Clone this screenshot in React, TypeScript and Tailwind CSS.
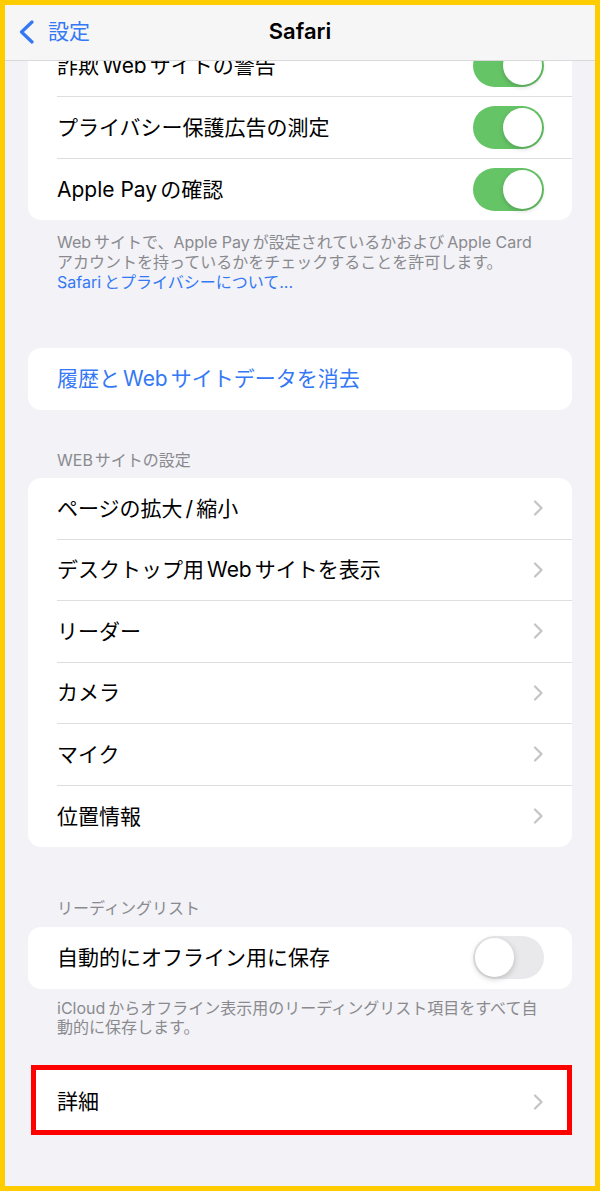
import React from 'react';

const font = { fontFamily: 'Inter, "Noto Sans CJK JP", sans-serif' };

// Latin words inside Japanese text get a little air on both sides, as iOS does
function L({ children }: { children: React.ReactNode }) {
  return <span className="mx-[3px]">{children}</span>;
}

function Chevron() {
  return (
    <svg width="11" height="16" viewBox="0 0 11 16" fill="none" className="shrink-0">
      <path d="M2 1.5 L8.5 8 L2 14.5" stroke="#c4c4c7" strokeWidth="2.2" strokeLinecap="round" strokeLinejoin="round" />
    </svg>
  );
}

function Toggle({ on }: { on: boolean }) {
  return on ? (
    <div className="w-[71px] h-[43px] rounded-full bg-[#65c466] flex items-center justify-end px-[2px] shrink-0">
      <div className="w-[39px] h-[39px] rounded-full bg-white shadow-[0_2px_5px_rgba(0,0,0,0.18)]" />
    </div>
  ) : (
    <div className="w-[71px] h-[43px] rounded-full bg-[#e9e9eb] flex items-center justify-start px-[2px] shrink-0">
      <div className="w-[39px] h-[39px] rounded-full bg-white shadow-[0_2px_6px_rgba(0,0,0,0.2)]" />
    </div>
  );
}

function Row({ label, right, last }: { label: React.ReactNode; right: React.ReactNode; last?: boolean }) {
  return (
    <div className="pl-[29px]">
      <div
        className={
          'h-[61.5px] flex items-center justify-between pr-[28px] ' +
          (last ? '' : 'border-b border-[#dedee0]')
        }
      >
        <span className="text-[21px] text-black">{label}</span>
        {right}
      </div>
    </div>
  );
}

export default function App() {
  const sites: [string, React.ReactNode][] = [
    ['zoom', <>ページの拡大<L>/</L>縮小</>],
    ['desktop', <>デスクトップ用<L>Web</L>サイトを表示</>],
    ['reader', 'リーダー'],
    ['camera', 'カメラ'],
    ['mic', 'マイク'],
    ['location', '位置情報'],
  ];

  return (
    <div className="w-[600px] h-[1191px] border-[5px] border-[#ffcc00] bg-[#f2f2f7] overflow-hidden relative" style={font}>
      {/* Nav bar, lies over the scrolled list */}
      <div className="absolute top-0 left-0 right-0 z-10 h-[56px] bg-[#f6f6f7] border-b border-[#d9d9dc] grid grid-cols-[1fr_auto_1fr] items-center pb-[2px]">
        <div className="flex items-center pl-[13px] gap-[13px]">
          <svg width="17" height="24" viewBox="0 0 17 24" fill="none">
            <path d="M14 2 L3.5 12 L14 22" stroke="#3478f6" strokeWidth="3.2" strokeLinecap="round" strokeLinejoin="round" />
          </svg>
          <span className="text-[21px] text-[#3478f6]">設定</span>
        </div>
        <div className="text-[22px] font-semibold text-black">Safari</div>
        <div />
      </div>

      <div className="pt-[30.5px] px-[23px]">
        {/* Card 1 */}
        <div className="bg-white rounded-[13px]">
          <Row label={<>詐欺<L>Web</L>サイトの警告</>} right={<Toggle on />} />
          <Row label="プライバシー保護広告の測定" right={<Toggle on />} />
          <Row label={<>Apple Pay<span className="ml-[3px]" />の確認</>} right={<Toggle on />} last />
        </div>
        <div className="mt-[12px] pl-[29px] text-[16px] leading-[20px] text-[#8a8a8e]">
          Web<span className="ml-[3px]" />サイトで、Apple Pay<span className="ml-[3px]" />が設定されているかおよび<L>Apple Card</L>
          <br />
          アカウントを持っているかをチェックすることを許可します。
          <div className="text-[#3478f6]">Safari<span className="ml-[3px]" />とプライバシーについて...</div>
        </div>

        {/* Clear history */}
        <div className="mt-[56px] bg-white rounded-[13px] h-[61.5px] flex items-center pl-[29px]">
          <span className="text-[21px] text-[#3478f6]">履歴と<L>Web</L>サイトデータを消去</span>
        </div>

        <div className="mt-[40.5px] mb-[8px] pl-[29px] text-[16px] leading-[20px] text-[#8a8a8e]">
          WEB<span className="ml-[2px]" />サイトの設定
        </div>
        <div className="bg-white rounded-[13px]">
          {sites.map(([k, s], i) => (
            <Row key={k} label={s} right={<Chevron />} last={i === sites.length - 1} />
          ))}
        </div>

        <div className="mt-[50.5px] mb-[9.5px] pl-[29px] text-[16px] leading-[20px] text-[#8a8a8e]">リーディングリスト</div>
        <div className="bg-white rounded-[13px]">
          <Row label="自動的にオフライン用に保存" right={<Toggle on={false} />} last />
        </div>
        <div className="mt-[10px] pl-[29px] text-[16px] leading-[19.5px] text-[#8a8a8e]">
          iCloud<span className="ml-[3px]" />からオフライン表示用のリーディングリスト項目をすべて自
          <br />
          動的に保存します。
        </div>

        {/* Advanced, marked with a red frame */}
        <div className="mt-[27px] ml-[3px] h-[70px] bg-white border-[5px] border-[#ff0000] flex items-center justify-between pl-[21px] pr-[23px] pt-[4px]">
          <span className="text-[21px] text-black">詳細</span>
          <Chevron />
        </div>
      </div>
    </div>
  );
}
